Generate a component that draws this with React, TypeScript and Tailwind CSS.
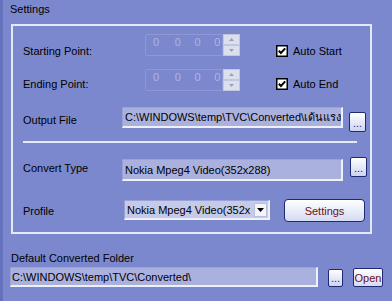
import React from "react";

function Check() {
  return (
    <svg width="12" height="12" viewBox="0 0 12 12">
      <rect x="0.75" y="0.75" width="10.5" height="10.5" fill="#ffffff" stroke="#000000" strokeWidth="1.5" />
      <path d="M2.8 5.8 L4.9 8 L9.2 3.4" fill="none" stroke="#000000" strokeWidth="2" />
    </svg>
  );
}

function Spin({ mt }: { mt: string }) {
  return (
    <div className={`flex ${mt}`}>
      <div className="w-[78px] h-[22px] border border-[#8e98d6] rounded-[2px] flex items-start pt-[0px] text-[#aeb5e2]">
        <span className="ml-[7px] w-[12px]">0</span>
        <span className="ml-[10px] w-[12px]">0</span>
        <span className="ml-[8px] w-[12px]">0</span>
        <span className="ml-[8px] w-[8px]">0</span>
      </div>
      <div className="flex flex-col w-[17px]">
        <div className="h-[11px] bg-[#dcdfee] border border-[#c3c7de] flex items-center justify-center">
          <svg width="5" height="3" viewBox="0 0 5 3"><path d="M0 3 L2.5 0 L5 3 Z" fill="#9a9fb8" /></svg>
        </div>
        <div className="h-[11px] bg-[#dcdfee] border border-[#c3c7de] flex items-center justify-center">
          <svg width="5" height="3" viewBox="0 0 5 3"><path d="M0 0 L2.5 3 L5 0 Z" fill="#9a9fb8" /></svg>
        </div>
      </div>
    </div>
  );
}

function DotBtn({ cls }: { cls: string }) {
  return (
    <div className={`${cls} border border-[#1f2a72] rounded-[2px] bg-gradient-to-b from-[#ffffff] to-[#cdd4f0] flex items-end justify-center text-[#1f2a72] leading-[10px] pb-[3px]`}>
      ...
    </div>
  );
}

function Field({ cls, text, textCls = "" }: { cls: string; text: string; textCls?: string }) {
  return (
    <div className={`${cls} bg-[#abb1df] border-t border-l border-[#9aa1d6] border-b-2 border-b-[#eef0fa] border-r-2 border-r-[#eef0fa] flex items-center overflow-hidden whitespace-nowrap text-[11px] ${textCls}`}>
      {text}
    </div>
  );
}

export default function App() {
  return (
    <div className="w-[392px] h-[301px] bg-[#7c88cd] flex overflow-hidden text-[11px] leading-[14px] text-black font-['Liberation_Sans','Noto_Sans','DejaVu_Sans',sans-serif]">
      <div className="w-[3px] bg-[#6571bd]" />
      <div className="flex-1 flex flex-col pl-[7px]">
        <div className="mt-[2px] h-[14px]">Settings</div>
        <div className="mt-[8px] ml-[1px] w-[361px] h-[210px] border-2 border-[#e4e8f8] flex flex-col pl-[10px]">
          {/* Row 1 */}
          <div className="h-[34px] flex items-start">
            <div className="w-[99px] mt-[18px]">Starting Point:</div>
            <div className="ml-[23px]"><Spin mt="mt-[8px]" /></div>
            <div className="ml-[36px] mt-[18px] h-[14px] flex items-center gap-[5px]">
              <Check />
              <span>Auto Start</span>
            </div>
          </div>
          {/* Row 2 */}
          <div className="h-[34px] flex items-start">
            <div className="w-[99px] mt-[17px]">Ending Point:</div>
            <div className="ml-[23px]"><Spin mt="mt-[9px]" /></div>
            <div className="ml-[36px] mt-[17px] h-[14px] flex items-center gap-[5px]">
              <Check />
              <span>Auto End</span>
            </div>
          </div>
          {/* Row 3 */}
          <div className="h-[40px] flex items-start">
            <div className="w-[99px] mt-[19px]">Output File</div>
            <Field cls="w-[221px] h-[21px] mt-[13px] pl-[2px]" text="C:\WINDOWS\temp\TVC\Converted\เด้นแรง" />
            <DotBtn cls="ml-[6px] mt-[18px] w-[17px] h-[20px]" />
          </div>
          <div className="mt-[7px] h-[2px] w-[334px] bg-[#e6e9f7]" />
          {/* Row 4 */}
          <div className="h-[40px] flex items-start">
            <div className="w-[99px] mt-[18px]">Convert Type</div>
            <Field cls="w-[221px] h-[22px] mt-[16px] pl-[2px]" text="Nokia Mpeg4 Video(352x288)" />
            <DotBtn cls="ml-[7px] mt-[14px] w-[17px] h-[20px]" />
          </div>
          {/* Row 5 */}
          <div className="flex-1 flex items-start">
            <div className="w-[99px] mt-[21px]">Profile</div>
            <div className="ml-[2px] mt-[17px] w-[146px] h-[20px] bg-[#c5cae9] border-t border-l border-[#9aa1d6] border-b-2 border-b-[#eef0fa] border-r-2 border-r-[#eef0fa] flex items-center overflow-hidden">
              <span className="flex-1 pl-[2px] text-[11px] whitespace-nowrap overflow-hidden">Nokia Mpeg4 Video(352x</span>
              <div className="w-[13px] h-[14px] mr-[1px] bg-[#f4f5fb] border border-[#b9bed9] flex items-center justify-center">
                <svg width="7" height="4" viewBox="0 0 7 4"><path d="M0 0 L7 0 L3.5 4 Z" fill="#000000" /></svg>
              </div>
            </div>
            <div className="ml-[14px] mt-[16px] w-[81px] h-[23px] border border-[#1f2a72] rounded-[4px] bg-gradient-to-b from-[#ffffff] to-[#d5dbf2] flex items-center justify-center text-[11px] text-[#6d0f22]">
              Settings
            </div>
          </div>
        </div>
        <div className="mt-[17px] ml-[1px] h-[14px]">Default Converted Folder</div>
        <div className="mt-[2px] flex items-start">
          <Field cls="w-[308px] h-[20px] pl-[1px]" text="C:\WINDOWS\temp\TVC\Converted\" />
          <DotBtn cls="ml-[10px] mt-[2px] w-[15px] h-[18px]" />
          <div className="ml-[10px] mt-[1px] w-[30px] h-[19px] border border-[#1f2a72] rounded-[2px] bg-gradient-to-b from-[#ffffff] to-[#d5dbf2] flex items-center justify-center text-[11px] text-[#6d0f22]">
            Open
          </div>
        </div>
      </div>
    </div>
  );
}
